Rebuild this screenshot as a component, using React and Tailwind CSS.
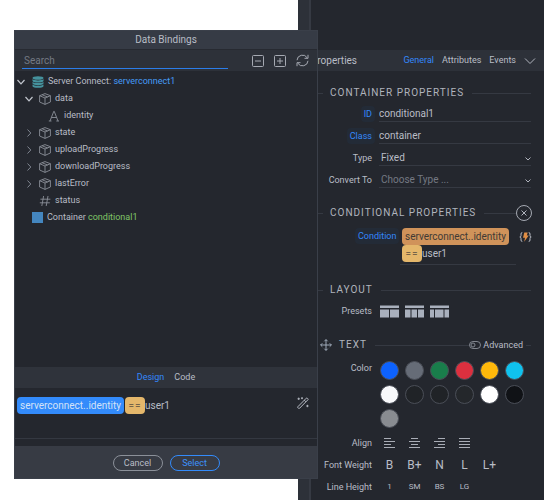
import React, { useState } from "react";

const treeItems = [
    { name: "data", icon: "cube", level: 1, arrow: "down" },
    { name: "identity", icon: "text", level: 2 },
    { name: "state", icon: "cube", level: 1, arrow: "right" },
    { name: "uploadProgress", icon: "cube", level: 1, arrow: "right" },
    { name: "downloadProgress", icon: "cube", level: 1, arrow: "right" },
    { name: "lastError", icon: "cube", level: 1, arrow: "right" },
    { name: "status", icon: "hash", level: 1 },
];

const swatches = [
    { name: "Primary", color: "bg-[#0d62fd]" },
    { name: "Secondary", color: "bg-[#666c77]" },
    { name: "Success", color: "bg-[#197d4b]" },
    { name: "Danger", color: "bg-[#dc303f]" },
    { name: "Warning", color: "bg-[#ffb90b]" },
    { name: "Info", color: "bg-[#10c2ee]" },
    { name: "Light", color: "bg-[#f8f9fb]" },
    { name: "Dark", color: "bg-[#202327]" },
    { name: "Body", color: "bg-[#202327]" },
    { name: "Muted", color: "bg-[#24272b]" },
    { name: "White", color: "bg-white" },
    { name: "Black", color: "bg-[#101216]" },
    { name: "Gray", color: "bg-[#898c91]" },
];

const Arrow = ({ direction }) => (
    <svg
        className="h-2.5 w-2.5 shrink-0"
        viewBox="0 0 10 10"
        fill="none"
        stroke={direction === "down" ? "#c3c7cf" : "#7f8590"}
    >
        {direction === "down" ? (
            <path d="M1.5 3 5 6.8 8.500 3" strokeWidth="1.2" />
        ) : (
            <path d="M3.5 1.5 6.8 5 3.5 8.5" />
        )}
    </svg>
);

const CubeIcon = () => (
    <svg className="h-3 w-3 shrink-0" viewBox="0 0 12 12" fill="none" stroke="#8b9099" strokeWidth="0.9">
        <path d="M6 .6 11.4 2.7V9L6 11.4.6 9V2.7zM.6 2.7 6 5l5.4-2.3M6 5v6.4M3.2 1.8 8.6 4" />
    </svg>
);

const LetterIcon = () => (
    <svg className="h-3 w-3 shrink-0" viewBox="0 0 12 12" fill="none" stroke="#8b9099" strokeWidth="0.9">
        <path d="M2 11 5.8 1.3h.4L10 11M3.4 7.5h5.2M.8 11h2.7M8.3 11H11" />
    </svg>
);

const HashIcon = () => (
    <svg className="h-3 w-3 shrink-0" viewBox="0 0 12 12" fill="none" stroke="#8b9099" strokeWidth="0.9">
        <path d="M4.6 1 2.8 11M9 1 7.2 11M1.4 4.2h10M.8 7.8h10" />
    </svg>
);

const DatabaseIcon = () => (
    <svg className="h-3 w-3 shrink-0" viewBox="0 0 12 12" fill="#45929d">
        <ellipse cx="6" cy="2" rx="5.500" ry="1.800" />
        <path d="M.5 3.100c1 1 3 1.300 5.500 1.300s4.500-.3 5.500-1.300v1.800C11 6 9 6.500 6 6.500S1 6 .5 4.900z" />
        <path d="M.5 5.900c1 1 3 1.200 5.500 1.200s4.500-.2 5.500-1.200v1.700C11 8.700 9 9.200 6 9.200S1 8.700.5 7.600z" />
        <path d="M.5 8.600c1 1 3 1.200 5.500 1.200s4.500-.2 5.500-1.200v1.600C11 11.300 9 11.800 6 11.800S1 11.300.5 10.200z" />
    </svg>
);

const RefreshIcon = () => (
    <svg className="h-[13px] w-[13px]" viewBox="0 0 13 13" fill="none" stroke="#a5a9b2" strokeWidth="1">
        <path d="M1 6.200A5.500 5.500 0 0 1 11.200 3.800M12 6.800A5.500 5.500 0 0 1 1.800 9.200" />
        <path d="M12 .8V4.300H8.500M1 12.200V8.700h3.500" />
    </svg>
);

const BoxIcon = ({ plus }) => (
    <svg className="h-3 w-3" viewBox="0 0 12 12" fill="none" stroke="#a5a9b2">
        <rect x=".5" y=".5" width="11" height="11" rx="1" />
        <path d={plus ? "M3 6h6M6 3v6" : "M3 6h6"} />
    </svg>
);

const WandIcon = () => (
    <svg className="h-3 w-3" viewBox="0 0 12 12" fill="none" stroke="#b9bdc6">
        <path d="M.9 9.700 9.300 1.200q.5-.5 1 0l.6.6q.5.5 0 1L2.500 11.300q-.5.500-1 0l-.6-.6q-.5-.5 0-1zM7.300 3.200l1.600 1.600" />
        <path d="M1.700.6v2.400M.5 1.800h2.400M5 .2v2M4 1.200h2M10.400 7.800v2.400M9.200 9h2.400" strokeWidth="0.9" />
    </svg>
);

const MoveIcon = () => (
    <svg className="h-3 w-3 shrink-0" viewBox="0 0 12 12" fill="none" stroke="#a9b4c4" strokeWidth="0.9">
        <path d="M6 .6v10.800M.6 6h10.800M4.300 2.300 6 .6l1.700 1.700M4.300 9.700 6 11.400l1.700-1.700M2.300 4.300.6 6l1.700 1.700M9.700 4.300 11.400 6 9.700 7.700" />
    </svg>
);

const BindIcon = () => (
    <svg className="h-3 w-[13px]" viewBox="0 0 13 12" fill="none" stroke="#b9bdc6">
        <path d="M3.300 1.500Q2 1.500 2 3v1.500Q2 6 .8 6 2 6 2 7.500V9q0 1.500 1.300 1.500M9.700 1.500Q11 1.500 11 3v1.500Q11 6 12.200 6 11 6 11 7.500V9q0 1.500-1.300 1.500" />
        <path d="M5.300 1.500h3.400L7.800 4.400h1.900L5.200 10.700 6 6.800H4z" fill="#e08e45" stroke="none" />
    </svg>
);

const presets = [
    "M0 4.500h9v8H0zM10 4.500h9v8h-9z",
    "M0 4.500h5.500v8H0zM6.500 4.500h5.500v8H6.500zM13 4.500h6v8h-6z",
    "M0 4.500h4v8H0zM5 4.500h8.500v8H5zM14.500 4.500h4.500v8h-4.500z",
];

const aligns = [
    { name: "Left", d: "M0 .5h7M0 3.500h11M0 6.500h7M0 9.500h11" },
    { name: "Center", d: "M2 .5h7M0 3.500h11M2 6.500h7M0 9.500h11" },
    { name: "Right", d: "M4 .5h7M0 3.500h11M4 6.500h7M0 9.500h11" },
    { name: "Justify", d: "M0 .5h11M0 3.500h11M0 6.500h11M0 9.500h11" },
];

const labelStyle = "w-16 shrink-0 whitespace-nowrap px-[3px] text-right text-[9px]";
const linkLabelStyle = "w-16 shrink-0 text-right text-[9px] text-[#3388fb]";
const linkStyle = "inline-block rounded-sm bg-[#232b37] px-[3px] leading-4";
const fieldStyle =
    "h-4 w-full min-w-0 appearance-none rounded-none border-b border-[#353942] bg-transparent text-[10px] outline-none";

const SectionTitle = ({ title, icon, children }) => (
    <div className="flex h-5 items-center">
        {icon ? (
            <span className="ml-[9px] mr-[7px]">{icon}</span>
        ) : (
            <span className="mr-[7px] h-px w-3 bg-[#353942]" />
        )}
        <h3 className="text-[10px] tracking-[1px] text-[#b0b4bd]">{title}</h3>
        <span className="ml-2 h-px flex-1 bg-[#353942]" />
        {children}
    </div>
);

const Row = ({ label, children }) => (
    <div className="flex h-[22px] items-center">
        <span className={labelStyle}>{label}</span>
        <div className="ml-0.5 flex items-center">{children}</div>
    </div>
);

const SelectArrow = () => (
    <svg
        className="pointer-events-none absolute right-0 top-1.5 h-1.5 w-1.5"
        viewBox="0 0 6 6"
        fill="none"
        stroke="#b0b4bd"
    >
        <path d="M.5 1.500 3 4l2.500-2.500" />
    </svg>
);

const Operator = () => (
    <span className="flex h-[17px] w-5 items-center justify-center rounded-sm bg-[#e4b76b] tracking-[1px] text-[#756348]">
        ==
    </span>
);

const DataBindings = () => {
    const [search, setSearch] = useState("");

    return (
        <div
            role="dialog"
            aria-label="Data Bindings"
            className="absolute left-3.5 top-[30px] w-[304px] border border-[#3a3f49] bg-[#24272e]"
        >
            <h2 className="flex h-[18px] items-center justify-center bg-[#363b45] text-[10px]">
                Data Bindings
            </h2>
            <div className="flex h-[22px] items-center border-t border-[#272a31] bg-[#2d3139] pr-2">
                <input
                    type="text"
                    aria-label="Search"
                    placeholder="Search"
                    value={search}
                    onChange={(e) => setSearch(e.target.value)}
                    className="ml-[7px] h-[17px] min-w-0 flex-1 border-b border-[#2b7de9] bg-transparent pl-0.5 text-[10px] outline-none placeholder:text-[#747983]"
                />
                <div className="ml-6 flex items-center gap-2.5">
                    <button aria-label="Collapse all"><BoxIcon /></button>
                    <button aria-label="Expand all"><BoxIcon plus /></button>
                    <button aria-label="Refresh"><RefreshIcon /></button>
                </div>
            </div>

            <ul className="h-[296px] pt-0.5 text-[9px]">
                <li className="flex h-[17px] items-center pl-px">
                    <Arrow direction="down" />
                    <span className="ml-1.5 mr-1"><DatabaseIcon /></span>
                    <span>
                        Server Connect: <span className="text-[#459cf7]">serverconnect1</span>
                    </span>
                </li>
                {treeItems.map((item) => (
                    <li
                        key={item.name}
                        className={`flex h-[17px] items-center gap-1 ${
                            item.level === 2 ? "pl-[33px]" : item.arrow ? "pl-[9px]" : "pl-6"
                        }`}
                    >
                        {item.arrow && (
                            <span className="mr-px"><Arrow direction={item.arrow} /></span>
                        )}
                        {item.icon === "cube" && <CubeIcon />}
                        {item.icon === "text" && <LetterIcon />}
                        {item.icon === "hash" && <HashIcon />}
                        {item.name}
                    </li>
                ))}
                <li className="flex h-[17px] items-center pl-[17px]">
                    <span className="mr-1 h-[11px] w-[11px] bg-[#4486bf]" />
                    <span>
                        Container <span className="text-[#80c567]">conditional1</span>
                    </span>
                </li>
            </ul>

            <div className="flex h-[21px] items-center justify-center gap-2.5 bg-[#2f333b] text-[9px]">
                <button className="text-[#3388fb]">Design</button>
                <button>Code</button>
            </div>
            <div className="flex h-[51px] items-start border-b border-[#343841] pl-0.5 pt-[9px]">
                <div className="flex flex-1 items-center text-[10px]">
                    <span className="mr-px flex h-[17px] items-center rounded-sm bg-[#338bfb] px-[3px] text-[#d3e2f7]">
                        serverconnect..identity
                    </span>
                    <Operator />
                    <span>user1</span>
                </div>
                <button aria-label="Format expression" className="mr-2"><WandIcon /></button>
            </div>
            <div className="mt-[7px] flex h-8 items-center justify-center gap-[7px] bg-[#373b44] pt-0.5 text-[9px]">
                <button className="h-4 w-[50px] rounded-full border border-[#8b9099]">Cancel</button>
                <button className="h-4 w-[50px] rounded-full border border-[#338bfb] text-[#3d91fb]">
                    Select
                </button>
            </div>
        </div>
    );
};

const Properties = () => {
    const [id, setId] = useState("conditional1");
    const [className, setClassName] = useState("container");

    return (
        <div className="min-w-0 flex-1 bg-[#24272e] pt-[50px]">
            <div className="flex h-[21px] items-center gap-2 bg-[#2d3139] pr-2 text-[9px]">
                <h2 className="flex-1 text-[10px]">Properties</h2>
                <button className="text-[#3388fb]">General</button>
                <button>Attributes</button>
                <button>Events</button>
                <button aria-label="More tabs">
                    <svg className="h-3 w-3" viewBox="0 0 12 12" fill="none" stroke="#b0b4bd">
                        <path d="M1 3.500 6 8.500l5-5" />
                    </svg>
                </button>
            </div>

            <div className="pr-[13px] pt-3">
                <SectionTitle title="CONTAINER PROPERTIES" />
                <div className="flex h-[22px] items-center gap-1">
                    <label htmlFor="prop-id" className={linkLabelStyle}>
                        <span className={linkStyle}>ID</span>
                    </label>
                    <input id="prop-id" value={id} onChange={(e) => setId(e.target.value)} className={fieldStyle} />
                </div>
                <div className="flex h-[22px] items-center gap-1">
                    <label htmlFor="prop-class" className={linkLabelStyle}>
                        <span className={linkStyle}>Class</span>
                    </label>
                    <input
                        id="prop-class"
                        value={className}
                        onChange={(e) => setClassName(e.target.value)}
                        className={fieldStyle}
                    />
                </div>
                <div className="flex h-[22px] items-center gap-1">
                    <label htmlFor="prop-type" className={labelStyle}>Type</label>
                    <div className="relative flex flex-1">
                        <select id="prop-type" className={`${fieldStyle} pl-0.5`}>
                            <option>Fixed</option>
                            <option>Fluid</option>
                        </select>
                        <SelectArrow />
                    </div>
                </div>
                <div className="flex h-[22px] items-center gap-1">
                    <label htmlFor="prop-convert" className={labelStyle}>Convert To</label>
                    <div className="relative flex flex-1">
                        <select id="prop-convert" className={`${fieldStyle} pl-0.5 text-[#747983]`}>
                            <option>Choose Type ...</option>
                        </select>
                        <SelectArrow />
                    </div>
                </div>
            </div>

            <div className="pr-3 pt-3">
                <SectionTitle title="CONDITIONAL PROPERTIES">
                    <button
                        aria-label="Remove condition"
                        className="flex h-4 w-4 items-center justify-center rounded-full border border-[#a5a9b2]"
                    >
                        <svg className="h-1.5 w-1.5" viewBox="0 0 6 6" stroke="#b0b4bd">
                            <path d="m.5.5 5 5m0-5-5 5" />
                        </svg>
                    </button>
                </SectionTitle>
                <div className="flex items-start pt-[5px]">
                    <span className="ml-11 rounded-sm bg-[#232b37] px-[3px] text-[9px] leading-4 text-[#3388fb]">
                        Condition
                    </span>
                    <div className="ml-auto w-[116px] border-b border-[#353942] pb-0.5 pl-0.5 text-[10px]">
                        <span className="flex h-[17px] w-fit items-center rounded-sm bg-[#d0935a] px-[3px] text-[#413a35]">
                            serverconnect..identity
                        </span>
                        <div className="flex items-center">
                            <Operator />
                            <span>user1</span>
                        </div>
                    </div>
                    <button aria-label="Bind condition" className="ml-[3px] pt-[3px]"><BindIcon /></button>
                </div>
            </div>

            <div className="pr-[13px] pt-[15px]">
                <SectionTitle title="LAYOUT" />
                <Row label="Presets">
                    {presets.map((d, i) => (
                        <button key={i} aria-label={`Layout preset ${i + 1}`} className="flex w-[25px] justify-center">
                            <svg className="h-[13px] w-[19px]" viewBox="0 0 19 13" fill="#a9b0bd">
                                <path d="M0 .5h19v2.500H0z" />
                                <path d={d} />
                            </svg>
                        </button>
                    ))}
                </Row>
            </div>

            <div className="pt-[13px]">
                <div className="pr-[13px]">
                    <SectionTitle title="TEXT" icon={<MoveIcon />}>
                        <button className="flex items-center gap-0.5 text-[9px]">
                            <svg className="h-2 w-3" viewBox="0 0 12 8" fill="none" stroke="#8b9099" strokeWidth="0.9">
                                <rect x=".5" y=".5" width="11" height="7" rx="3.500" />
                                <circle cx="4" cy="4" r="2" />
                            </svg>
                            Advanced
                        </button>
                        <span className="ml-[3px] h-px w-[5px] bg-[#353942]" />
                    </SectionTitle>
                </div>
                <div className="flex items-start pb-0.5 pt-[3px]">
                    <span className={`${labelStyle} leading-5`}>Color</span>
                    <div className="ml-0.5 grid w-[150px] grid-cols-6">
                        {swatches.map((swatch) => (
                            <div key={swatch.name} className="flex h-6 items-center justify-center">
                                <button
                                    aria-label={swatch.name}
                                    className={`h-[19px] w-[19px] rounded-full border border-[#4a4e57] ${swatch.color}`}
                                />
                            </div>
                        ))}
                    </div>
                </div>
                <Row label="Align">
                    {aligns.map((align) => (
                        <button key={align.name} aria-label={align.name} className="flex w-[25px] justify-center">
                            <svg className="h-2.5 w-[11px]" viewBox="0 0 11 10" fill="none" stroke="#a9adb6">
                                <path d={align.d} />
                            </svg>
                        </button>
                    ))}
                </Row>
                <Row label="Font Weight">
                    {["B", "B+", "N", "L", "L+"].map((weight) => (
                        <button key={weight} className="w-[25px] text-center text-[12px]">{weight}</button>
                    ))}
                </Row>
                <Row label="Line Height">
                    {["1", "SM", "BS", "LG"].map((height) => (
                        <button key={height} className="w-[25px] text-center text-[8px]">{height}</button>
                    ))}
                </Row>
            </div>
        </div>
    );
};

const App = () => {
    return (
        <div className="relative min-h-screen bg-white font-['Roboto','Noto_Sans',sans-serif] leading-none text-[#b9bdc6]">
            <div className="flex min-h-screen pl-[298px] pr-px">
                <div className="w-[13px] shrink-0 border-r-2 border-[#363a43] bg-[#2d3139]" />
                <Properties />
            </div>
            <DataBindings />
        </div>
    );
};

export default App;
